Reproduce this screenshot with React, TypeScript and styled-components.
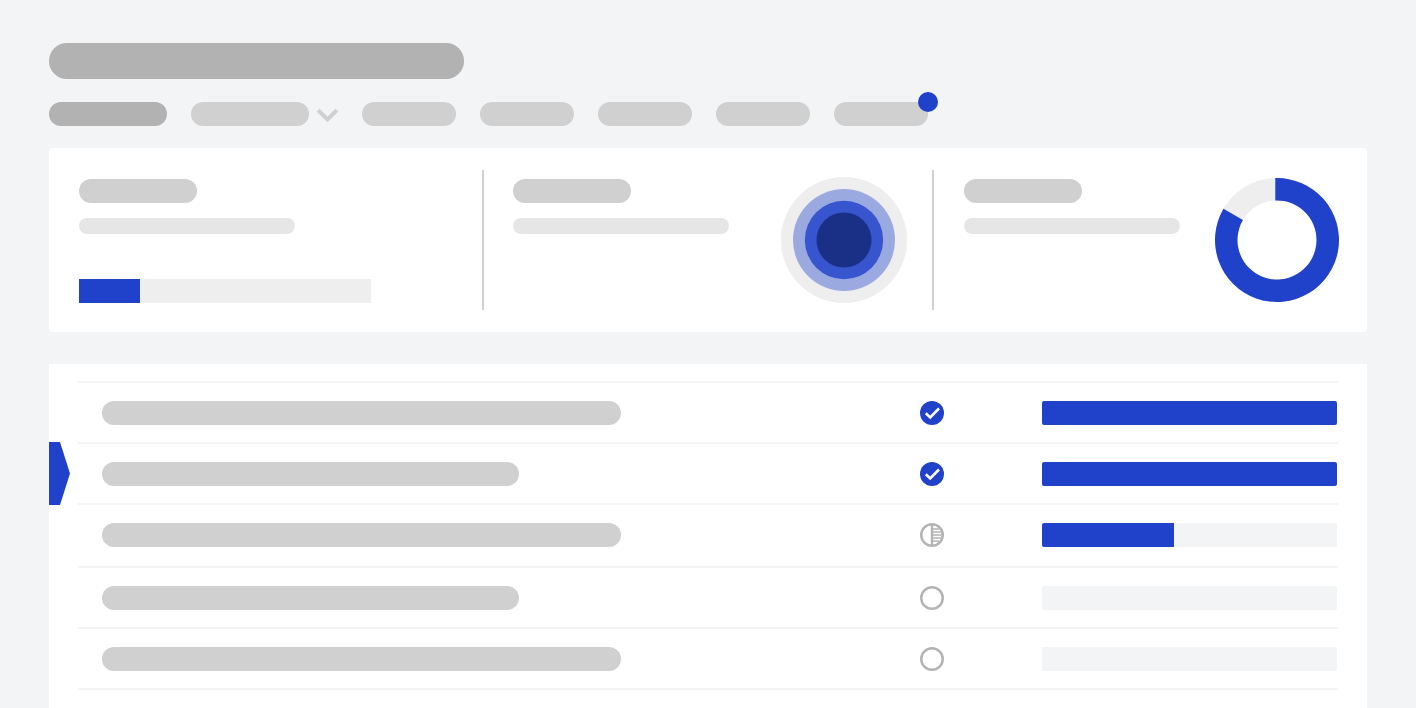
import styled, { createGlobalStyle } from 'styled-components';

const BLUE = '#2042cb';

const GlobalStyle = createGlobalStyle`
  html, body {
    margin: 0;
    padding: 0;
    height: 708px;
    overflow: hidden;
    background: #f3f4f6;
  }
`;

const Page = styled.div`
  height: 708px;
  padding: 43px 49px 0;
  box-sizing: border-box;
  overflow: hidden;
`;

const Pill = styled.div<{ $w: number; $h?: number; $c?: string }>`
  width: ${(p) => p.$w}px;
  height: ${(p) => p.$h ?? 24}px;
  border-radius: ${(p) => (p.$h ?? 24) / 2}px;
  background: ${(p) => p.$c ?? '#d0d0d0'};
  flex: none;
`;

const Title = styled(Pill)`
  margin-bottom: 23px;
`;

const Tabs = styled.div`
  display: flex;
  align-items: flex-start;
  margin-bottom: 22px;
`;

const Tab = styled.div<{ $gap?: number }>`
  position: relative;
  display: flex;
  margin-right: ${(p) => p.$gap ?? 24}px;
`;

const Chevron = styled.svg`
  position: absolute;
  left: 125px;
  top: 6px;
`;

const Dot = styled.span`
  position: absolute;
  right: -10px;
  top: -10px;
  width: 20px;
  height: 20px;
  border-radius: 50%;
  background: ${BLUE};
`;

const Summary = styled.section`
  height: 184px;
  background: #fff;
  border-radius: 4px;
  display: flex;
  align-items: center;
  margin-bottom: 32px;
`;

const Cell = styled.div<{ $w: number; $pad: number }>`
  width: ${(p) => p.$w}px;
  height: 140px;
  box-sizing: border-box;
  padding: 9px 0 0 ${(p) => p.$pad}px;
  display: flex;
  justify-content: space-between;
  flex: none;
`;

const Divider = styled.div`
  width: 2px;
  height: 140px;
  background: #d0d0d0;
  flex: none;
`;

const Texts = styled.div`
  display: flex;
  flex-direction: column;
  gap: 15.5px;
`;

const Meter = styled.div`
  width: 292.3px;
  height: 24px;
  margin-top: 29px;
  flex: none;
  background: #eeeeee;
`;

const MeterFill = styled.div`
  height: 100%;
  background: ${BLUE};
`;

const Graphic = styled.svg<{ $right: number; $top: number }>`
  display: block;
  flex: none;
  margin: ${(p) => p.$top}px ${(p) => p.$right}px 0 0;
`;

const Table = styled.section`
  position: relative;
  background: #fff;
  padding: 17px 29px 0;
  height: 400px;
`;

const Row = styled.div<{ $h?: number }>`
  height: ${(p) => p.$h ?? 61}px;
  box-sizing: border-box;
  border-top: 2px solid #f3f4f6;
  display: flex;
  align-items: flex-start;
  padding: 18px 0 0 24px;
`;

const RowName = styled.div`
  width: 818.3px;
  flex: none;
`;

const RowIcon = styled.svg`
  display: block;
  flex: none;
  margin-right: 98px;
`;

const Progress = styled.div`
  width: 295px;
  height: 24px;
  flex: none;
  border-radius: 2px;
  background: #f3f4f6;
  overflow: hidden;
`;

const ProgressFill = styled.div`
  height: 100%;
  background: ${BLUE};
`;

const Marker = styled.svg`
  position: absolute;
  left: 0;
  top: 78px;
`;

function Check() {
  return (
    <RowIcon width="24" height="24" viewBox="0 0 24 24">
      <circle cx="12" cy="12" r="12" fill={BLUE} />
      <path d="M5.8 12.2l4.4 4.3 8.8-9" fill="none" stroke="#fff" strokeWidth="2.6" />
    </RowIcon>
  );
}

function HalfDone() {
  return (
    <RowIcon width="24" height="24" viewBox="0 0 24 24">
      <circle cx="12" cy="12" r="10.75" fill="#fff" stroke="#b4b4b4" strokeWidth="2.5" />
      <path d="M12 1.5V22.5" fill="none" stroke="#b4b4b4" strokeWidth="2.4" />
      <path
        d="M12 6h7M12 9h9M12 12h10M12 15h9M12 18h7"
        fill="none"
        stroke="#b4b4b4"
        strokeWidth="1.5"
      />
    </RowIcon>
  );
}

function Empty() {
  return (
    <RowIcon width="24" height="24" viewBox="0 0 24 24">
      <circle cx="12" cy="12" r="10.75" fill="#fff" stroke="#b4b4b4" strokeWidth="2.5" />
    </RowIcon>
  );
}

const rows = [
  { name: 519, icon: <Check />, progress: 100, h: 61 },
  { name: 417, icon: <Check />, progress: 100, h: 61 },
  { name: 519, icon: <HalfDone />, progress: 44.6, h: 63 },
  { name: 417, icon: <Empty />, progress: 0, h: 61 },
  { name: 519, icon: <Empty />, progress: 0, h: 61 },
];

function App() {
  return (
    <Page>
      <GlobalStyle />
      <Title $w={415} $h={35.7} $c="#b2b2b2" />
      <Tabs>
        <Tab>
          <Pill $w={118} $c="#b2b2b2" />
        </Tab>
        <Tab $gap={53}>
          <Pill $w={118} />
          <Chevron width="24" height="20" viewBox="0 0 24 20">
            <path d="M2.1 2.1l9.4 9.4 9.4-9.4" fill="none" stroke="#d0d0d0" strokeWidth="4" />
          </Chevron>
        </Tab>
        <Tab>
          <Pill $w={94} />
        </Tab>
        <Tab>
          <Pill $w={94} />
        </Tab>
        <Tab>
          <Pill $w={94} />
        </Tab>
        <Tab>
          <Pill $w={94} />
        </Tab>
        <Tab>
          <Pill $w={94} />
          <Dot />
        </Tab>
      </Tabs>

      <Summary>
        <Cell $w={433} $pad={29.7}>
          <Texts>
            <Pill $w={118} />
            <Pill $w={216} $h={16} $c="#e6e6e6" />
            <Meter>
              <MeterFill style={{ width: '21%' }} />
            </Meter>
          </Texts>
        </Cell>
        <Divider />
        <Cell $w={448} $pad={29}>
          <Texts>
            <Pill $w={118} />
            <Pill $w={216} $h={16} $c="#e6e6e6" />
          </Texts>
          <Graphic $right={25} $top={-2} width="126" height="126" viewBox="0 0 126 126">
            <circle cx="63" cy="63" r="63" fill="#eeeeee" />
            <circle cx="63" cy="63" r="51" fill="#9ba9e1" />
            <circle cx="63" cy="63" r="39.2" fill="#3755cf" />
            <circle cx="63" cy="63" r="27.5" fill="#1a2f86" />
          </Graphic>
        </Cell>
        <Divider />
        <Cell $w={433} $pad={30}>
          <Texts>
            <Pill $w={118} />
            <Pill $w={216} $h={16} $c="#e6e6e6" />
          </Texts>
          <Graphic $right={28} $top={-1} width="124" height="124" viewBox="0 0 124 124">
            <circle cx="62" cy="62" r="50.75" fill="none" stroke="#eeeeee" strokeWidth="22.5" />
            <path
              d="M60.3 .02A62 62 0 1 1 8.47 30.72L27.9 42.07A39.5 39.5 0 1 0 60.3 22.54Z"
              fill={BLUE}
            />
          </Graphic>
        </Cell>
      </Summary>

      <Table>
        <Marker width="21" height="63" viewBox="0 0 21 63">
          <path d="M0 0h11l10 31.5L11 63H0z" fill={BLUE} />
        </Marker>
        {rows.map((r, i) => (
          <Row key={i} $h={r.h}>
            <RowName>
              <Pill $w={r.name} />
            </RowName>
            {r.icon}
            <Progress>
              <ProgressFill style={{ width: `${r.progress}%` }} />
            </Progress>
          </Row>
        ))}
        <Row />
      </Table>
    </Page>
  );
}

export default App;
